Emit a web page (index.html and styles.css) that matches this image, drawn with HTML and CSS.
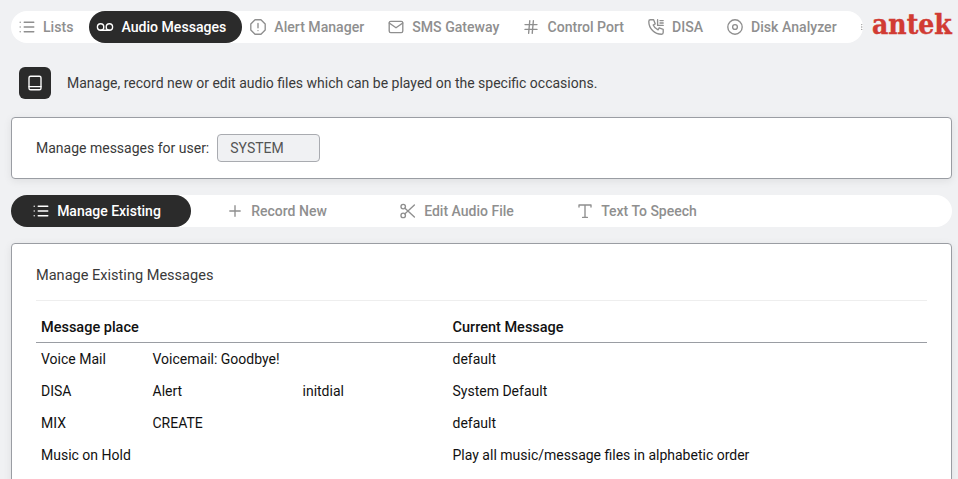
FILE: index.html
```html
<!doctype html>
<html lang="en">
<head>
    <meta charset="UTF-8">
    <title>Audio Messages</title>
    <link rel="stylesheet" href="styles.css">
</head>
<body>
<div class="page">
    <div class="topbar">
        <nav class="tabs">
            <a class="tab">
                <svg class="icon" viewBox="2 2 20 20"><path d="M8.500 6h12M8.500 12h12M8.500 18h12M3.500 6v.01M3.500 12v.01M3.500 18v.01"/></svg>
                Lists
            </a>
            <a class="tab active">
                <svg class="icon" viewBox="2 2 20 20"><circle cx="6.500" cy="12" r="4"/><circle cx="17.500" cy="12" r="4"/><path d="M6.500 16h11"/></svg>
                Audio Messages
            </a>
            <a class="tab">
                <svg class="icon" viewBox="2 2 20 20"><path d="M8.300 3h7.400l5.300 5.300v7.400L15.700 21H8.300L3 15.700V8.300z"/><path d="M12 7.500v5.500M12 16.500v.01"/></svg>
                Alert Manager
            </a>
            <a class="tab">
                <svg class="icon" viewBox="2 2 20 20"><rect x="3.500" y="5" width="17" height="14" rx="2"/><path d="M3.500 7l8.500 6 8.500-6"/></svg>
                SMS Gateway
            </a>
            <a class="tab">
                <svg class="icon" viewBox="2 2 20 20"><path d="M4.500 9h15M4.500 15h15M10.500 4L9 20M15 4l-1.500 16"/></svg>
                Control Port
            </a>
            <a class="tab">
                <svg class="icon" viewBox="2 2 20 20"><path d="M5 3h4l2 5-2.500 1.500a11 11 0 0 0 6 6L16 13l5 2v4a2 2 0 0 1-2 2A16 16 0 0 1 3 5a2 2 0 0 1 2-2"/><path d="M14 3v7h7M17 4h4M17 7h4"/></svg>
                DISA
            </a>
            <a class="tab">
                <svg class="icon" viewBox="2 2 20 20"><circle cx="12" cy="12" r="9"/><circle cx="12" cy="12" r="3"/></svg>
                Disk Analyzer
            </a>
            <a class="tab">
                <svg class="icon" viewBox="2 2 20 20"><path d="M3 9v.01M3 12v.01M3 15v.01"/></svg>
            </a>
        </nav>
        <div class="logo">antek</div>
    </div>

    <div class="intro">
        <span class="intro-icon">
            <svg class="icon" viewBox="2 2 20 20"><rect x="4.500" y="3.500" width="15" height="17" rx="2"/><path d="M4.500 16.500h15"/></svg>
        </span>
        <p>Manage, record new or edit audio files which can be played on the specific occasions.</p>
    </div>

    <div class="card user-card">
        <label for="user">Manage messages for user:</label>
        <input type="text" id="user" value="SYSTEM" readonly>
    </div>

    <nav class="subtabs">
        <a class="subtab active">
            <svg class="icon" viewBox="2 2 20 20"><path d="M8.500 6h12M8.500 12h12M8.500 18h12M3.500 6v.01M3.500 12v.01M3.500 18v.01"/></svg>
            Manage Existing
        </a>
        <a class="subtab">
            <svg class="icon" viewBox="2 2 20 20"><path d="M12 5.500v13M5.500 12h13"/></svg>
            Record New
        </a>
        <a class="subtab">
            <svg class="icon" viewBox="2 2 20 20"><circle cx="6" cy="6.500" r="2.800"/><circle cx="6" cy="17.500" r="2.800"/><path d="M8.200 8.500L20 19.500M8.200 15.500L20 4.500"/></svg>
            Edit Audio File
        </a>
        <a class="subtab">
            <svg class="icon" viewBox="2 2 20 20"><path d="M4.500 7V4.500h15V7M12 4.500v15.500M9 20h6"/></svg>
            Text To Speech
        </a>
    </nav>

    <div class="card list-card">
        <h2>Manage Existing Messages</h2>
        <table>
            <colgroup>
                <col class="col-place">
                <col class="col-name">
                <col class="col-extra">
                <col>
            </colgroup>
            <thead>
                <tr><th colspan="3">Message place</th><th>Current Message</th></tr>
            </thead>
            <tbody>
                <tr><td>Voice Mail</td><td>Voicemail: Goodbye!</td><td></td><td>default</td></tr>
                <tr><td>DISA</td><td>Alert</td><td>initdial</td><td>System Default</td></tr>
                <tr><td>MIX</td><td>CREATE</td><td></td><td>default</td></tr>
                <tr><td>Music on Hold</td><td></td><td></td><td>Play all music/message files in alphabetic order</td></tr>
            </tbody>
        </table>
    </div>
</div>
</body>
</html>
```

FILE: styles.css
```css
* {
    padding: 0;
    margin: 0;
    box-sizing: border-box;
}

html, body {
    height: 479px;
    overflow: hidden;
}

body {
    background: #f0f1f3;
    color: #3a3a3a;
    font-family: Roboto, "Liberation Sans", sans-serif;
    font-size: 14px;
}

.page {
    padding: 11px 6px 0 11px;
}

.icon {
    width: 16px;
    height: 16px;
    flex: none;
    fill: none;
    stroke: currentColor;
    stroke-width: 1.700;
    stroke-linecap: round;
    stroke-linejoin: round;
    overflow: visible;
}

.topbar {
    display: flex;
    height: 32px;
}

.tabs {
    display: flex;
    width: 852px;
    background: #fff;
    border-radius: 16px;
    overflow: hidden;
}

.tab {
    display: flex;
    flex: none;
    align-items: center;
    gap: 8px;
    height: 32px;
    padding: 0 16px 0 8px;
    border-radius: 16px;
    color: #8f8f8f;
    font-size: 14.100px;
    font-weight: 500;
    white-space: nowrap;
}

.tab.active,
.subtab.active {
    background: #2b2b2b;
    color: #fff;
}

.logo {
    margin: -2px 0 0 9px;
    color: #d13b33;
    font-family: "DejaVu Serif", serif;
    font-size: 28px;
    font-stretch: condensed;
    font-weight: 700;
    line-height: 32px;
    -webkit-text-stroke: 0.4px #d13b33;
}

.intro {
    display: flex;
    align-items: center;
    gap: 16px;
    margin: 24px 0 18px 8px;
}

.intro-icon {
    display: flex;
    align-items: center;
    justify-content: center;
    width: 32px;
    height: 32px;
    background: #2b2b2b;
    border-radius: 6px;
    color: #fff;
}

.card {
    background: #fff;
    border: 1px solid #9a9da3;
    border-radius: 4px;
    box-shadow: 0 2px 8px rgba(0, 0, 0, 0.08);
}

.user-card {
    display: flex;
    align-items: center;
    gap: 8px;
    height: 62px;
    padding: 0 24px;
}

input {
    width: 103px;
    height: 28px;
    padding: 0 12px;
    background: #f0f1f3;
    border: 1px solid #a9abb0;
    border-radius: 4px;
    color: #555;
    font-family: inherit;
    font-size: 14px;
}

input:focus {
    outline: none;
}

.subtabs {
    display: flex;
    height: 32px;
    margin: 16px 0;
    background: #fff;
    border-radius: 16px;
}

.subtab {
    display: flex;
    align-items: center;
    justify-content: center;
    gap: 8px;
    width: 180px;
    padding-right: 8px;
    border-radius: 16px;
    color: #8f8f8f;
    font-weight: 500;
}

.list-card {
    height: 300px;
    padding: 0 24px;
}

h2 {
    height: 57px;
    padding-top: 22px;
    border-bottom: 1px solid #eeeeee;
    font-size: 14.560px;
    font-weight: 400;
    line-height: 19px;
}

table {
    width: 100%;
    margin-top: 10px;
    border-collapse: collapse;
    table-layout: fixed;
    color: #111;
}

.col-place {
    width: 111.500px;
}

.col-name,
.col-extra {
    width: 150px;
}

th {
    height: 31px;
    padding: 2px 5px 0;
    border-bottom: 1px solid #9a9da3;
    font-size: 14.500px;
    font-weight: 500;
    text-align: left;
}

td {
    height: 32px;
    padding: 0 5px;
}

tbody tr:first-child td {
    height: 33px;
    padding-top: 1px;
}
```
